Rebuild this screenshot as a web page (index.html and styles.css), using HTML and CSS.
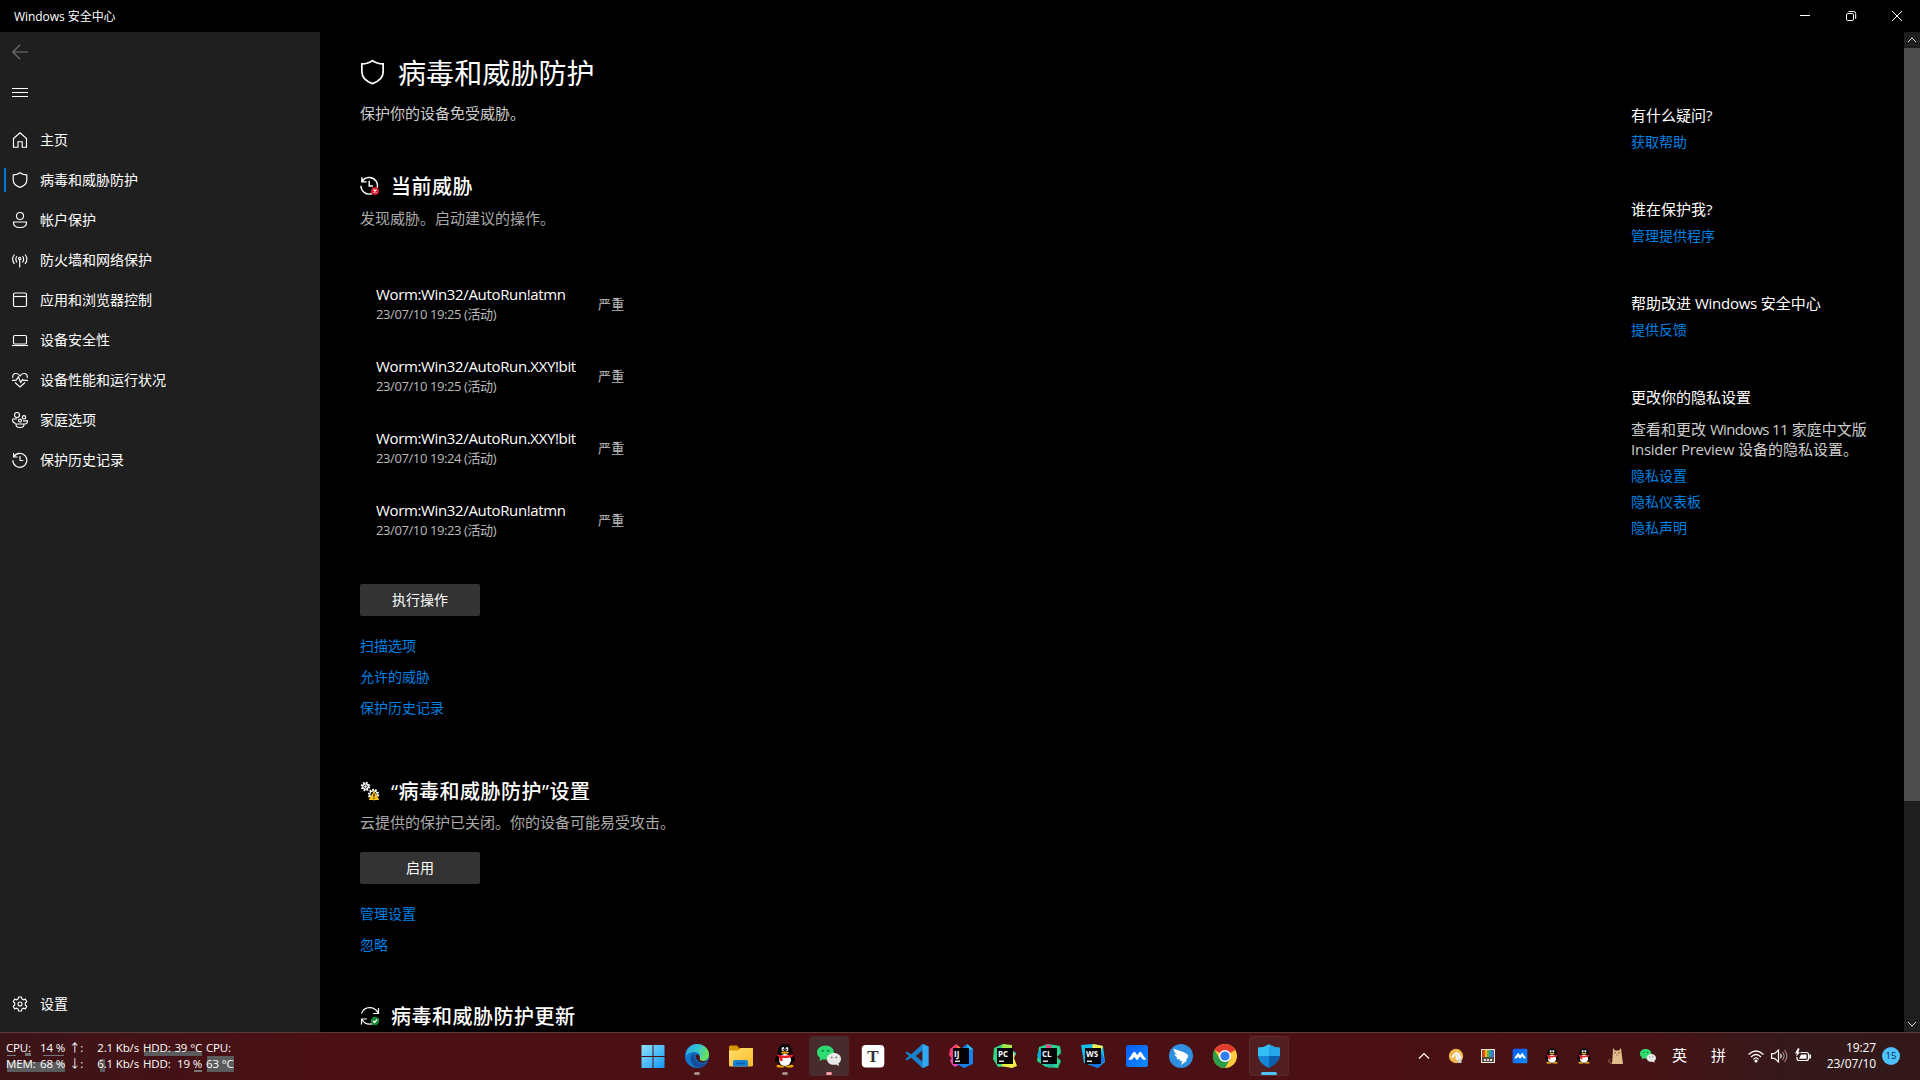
FILE: index.html
```html
<!DOCTYPE html>
<html lang="zh-CN">
<head>
<meta charset="utf-8">
<title>Windows 安全中心</title>
<link rel="stylesheet" href="styles.css">
</head>
<body>
<svg class="defs" width="0" height="0" aria-hidden="true">
  <defs>
    <linearGradient id="gWin" x1="0" y1="0" x2="1" y2="1"><stop offset="0" stop-color="#8fe4fd"/><stop offset="1" stop-color="#1197f5"/></linearGradient>
    <linearGradient id="gEdge" x1="0" y1="0" x2="1" y2=".4"><stop offset="0" stop-color="#2fa4e8"/><stop offset=".5" stop-color="#33c1d6"/><stop offset="1" stop-color="#6be05c"/></linearGradient>
    <linearGradient id="gFolder" x1="0" y1="0" x2="1" y2="1"><stop offset="0" stop-color="#ffdf70"/><stop offset="1" stop-color="#fcbb26"/></linearGradient>
    <linearGradient id="gMeet" x1="0" y1="0" x2="1" y2="1"><stop offset="0" stop-color="#0a5cff"/><stop offset="1" stop-color="#0a8cff"/></linearGradient>
    <symbol id="shield" viewBox="0 0 16 16"><path d="M8 .7C9.8 2.1 12 2.8 14.8 2.8V8c0 3.300-2.400 5.900-6.800 7.400C3.600 13.900 1.200 11.300 1.200 8V2.800C4 2.800 6.200 2.100 8 .7z"/></symbol>
    <symbol id="history" viewBox="0 0 16 16"><path d="M1.600 1v4h4M1.800 4.700A7 7 0 1 1 .8 8.300M8 4v4.500h3.200"/></symbol>
    <symbol id="penguin" viewBox="0 0 24 24">
      <ellipse cx="7.500" cy="22" rx="4" ry="1.500" fill="#f7a800"/><ellipse cx="16.500" cy="22" rx="4" ry="1.500" fill="#f7a800"/>
      <path d="M12 0C7.500 0 5 3 5 7.500c0 2-3 6-3 9 0 1.500 1 1.700 2 0 0 3.500 3 5.500 8 5.500s8-2 8-5.500c1 1.700 2 1.500 2 0 0-3-3-7-3-9C19 3 16.500 0 12 0z" fill="#050505"/>
      <ellipse cx="12" cy="16" rx="6" ry="6" fill="#fff"/><ellipse cx="10" cy="5" rx="1.400" ry="2" fill="#fff"/><ellipse cx="14" cy="5" rx="1.400" ry="2" fill="#fff"/><circle cx="10.400" cy="5.300" r=".6"/><circle cx="13.600" cy="5.300" r=".6"/>
      <ellipse cx="12" cy="8.600" rx="4" ry="1.200" fill="#f7a800"/><path d="M4.500 10c4 2.200 11 2.200 15 0l.5 2.500c-4 1.600-8 1.700-10.500 1.300V17H6.500v-4l-2.300-1z" fill="#eb1c26"/>
    </symbol>
    <symbol id="wechat" viewBox="0 0 24 24">
      <path d="M8.500 1.500C3.800 1.500 0 4.600 0 8.500c0 2.200 1.200 4.100 3.100 5.400L2.500 17l3.300-1.700c.9.200 1.800.3 2.700.3 4.700 0 8.500-3.200 8.500-7.100s-3.800-7-8.500-7z" fill="#2fdc72"/><circle cx="5.600" cy="6.800" r="1.100" fill="#0b7a3a"/><circle cx="11.300" cy="6.800" r="1.100" fill="#0b7a3a"/>
      <path d="M17 9c-4 0-7.100 2.600-7.100 5.900s3.100 5.900 7.100 5.900c.8 0 1.500-.1 2.200-.3L22 22l-.5-2.700c1.600-1.100 2.500-2.600 2.500-4.400C24 11.600 21 9 17 9z" fill="#e8e8e8"/><circle cx="14.700" cy="13.400" r=".9" fill="#777"/><circle cx="19.300" cy="13.400" r=".9" fill="#777"/>
    </symbol>
    <symbol id="meeting" viewBox="0 0 24 24"><rect x="1" y="1" width="22" height="22" rx="2.500" fill="url(#gMeet)"/><path d="M3.300 15.500 8.300 8.300q1-1.300 2 0l1.900 3 2-3q1-1.300 2 0l4.900 7.200q-2.800 1-4.300-.9l-1.600-2.300-2.200 3.100q-1.200 1.200-2.200-.3l-1.500-2.300-1.700 2.300Q6.200 16.500 3.300 15.500z" fill="#fff"/></symbol>
    <symbol id="gear" viewBox="0 0 16 16"><path d="M6.600 1h2.800l.5 1.900 1.500.9 2-.6 1.300 2.400-1.400 1.500v1.800l1.400 1.500-1.300 2.400-2-.6-1.500.9-.5 1.900H6.600l-.5-1.900-1.500-.9-2 .6-1.300-2.400 1.400-1.500V7.100L1.300 5.600l1.300-2.400 2 .6 1.500-.9z"/><circle cx="8" cy="8" r="2"/></symbol>
  </defs>
</svg>

<header class="titlebar">
  <span class="app-name">Windows 安全中心</span>
  <div class="window-buttons">
    <svg viewBox="0 0 12 12"><path d="M1 5.500h10"/></svg>
    <svg viewBox="0 0 12 12"><rect x="1.500" y="3.500" width="7" height="7" rx="1.300"/><path d="M3.500 1.500h5.200q2 0 2 2V9"/></svg>
    <svg viewBox="0 0 12 12"><path d="M1 1l10 10M11 1 1 11"/></svg>
  </div>
</header>

<div class="window">
  <nav class="sidebar">
    <div class="nav-row back"><svg viewBox="0 0 16 16"><path d="M16 8H.8M8 .8.8 8 8 15.200"/></svg></div>
    <div class="nav-row menu"><svg viewBox="0 0 16 16"><path d="M0 4.500h16M0 8.500h16M0 12.500h16"/></svg></div>
    <div class="nav-list">
      <div class="nav-row"><svg viewBox="0 0 16 16"><path d="M1.500 6.500 8 .8l6.500 5.700v8.700h-4.300V9.700H6v5.500H1.500z"/></svg><span>主页</span></div>
      <div class="nav-row active"><svg><use href="#shield"/></svg><span>病毒和威胁防护</span></div>
      <div class="nav-row"><svg viewBox="0 0 16 16"><circle cx="8" cy="4" r="3.500"/><path d="M1.500 10h13q.4 5.500-6.500 5.500T1.500 10z"/></svg><span>帐户保护</span></div>
      <div class="nav-row"><svg viewBox="0 0 16 16"><path d="M7.700 7v8.500M2.500 2.500Q-1.300 7 2.500 12M13 2.500Q16.800 7 13 12M5 4Q2.700 7 5 10.500M10.500 4q2.300 3 0 6.500"/><circle cx="7.700" cy="6.500" r="1.200"/></svg><span>防火墙和网络保护</span></div>
      <div class="nav-row"><svg viewBox="0 0 16 16"><rect x="1.500" y="1" width="13" height="13.500" rx="1.500"/><path d="M1.500 4.500h13"/></svg><span>应用和浏览器控制</span></div>
      <div class="nav-row"><svg viewBox="0 0 16 16"><rect x="1.500" y="3.500" width="13" height="8.500" rx="1.200"/><path d="M0 13.500h16"/></svg><span>设备安全性</span></div>
      <div class="nav-row"><svg viewBox="0 0 16 16"><path d="M.9 6C0 3 2 1.500 4 1.500c2 0 3.200 1 4 2.500.8-1.500 2-2.500 4-2.500s4 1.500 3.100 4.500M0 8.300h4L6.300 5l2.400 5.300 2-2.800.8.800H16M3 10.500l5 4.500 5-4.500"/></svg><span>设备性能和运行状况</span></div>
      <div class="nav-row"><svg viewBox="0 0 16 16"><circle cx="5" cy="3" r="2.500"/><circle cx="12" cy="5.300" r="1.700"/><circle cx="8" cy="8.600" r="1.500"/><path d="M5 7H.8Q0 11.200 3.800 11.200M11 8.800h4.500q.2 3-3 3.200M4 12h8q.4 3.500-4 3.500T4 12z"/></svg><span>家庭选项</span></div>
      <div class="nav-row"><svg><use href="#history"/></svg><span>保护历史记录</span></div>
    </div>
    <div class="nav-row settings"><svg><use href="#gear"/></svg><span>设置</span></div>
  </nav>

  <main class="content">
    <div class="primary">
      <h1><svg><use href="#shield"/></svg>病毒和威胁防护</h1>
      <p class="lead">保护你的设备免受威胁。</p>

      <section class="current">
        <h2><svg viewBox="0 0 20 20"><g transform="scale(1.180)"><path d="M1.600 1v4h4M1.800 4.700A7 7 0 1 1 .8 8.300M7.800 4v4.500h3.200"/></g><circle class="bad" cx="15" cy="15" r="4"/><path class="mark" d="m13.500 13.500 3 3m0-3-3 3"/></svg>当前威胁</h2>
        <p>发现威胁。启动建议的操作。</p>
        <ul class="threats">
          <li><div><b>Worm:Win32/AutoRun!atmn</b><small>23/07/10 19:25 (活动)</small></div><em>严重</em></li>
          <li><div><b>Worm:Win32/AutoRun.XXY!bit</b><small>23/07/10 19:25 (活动)</small></div><em>严重</em></li>
          <li><div><b>Worm:Win32/AutoRun.XXY!bit</b><small>23/07/10 19:24 (活动)</small></div><em>严重</em></li>
          <li><div><b>Worm:Win32/AutoRun!atmn</b><small>23/07/10 19:23 (活动)</small></div><em>严重</em></li>
        </ul>
        <button>执行操作</button>
        <div class="links"><a>扫描选项</a><a>允许的威胁</a><a>保护历史记录</a></div>
      </section>

      <section class="protection">
        <h2><svg viewBox="0 0 20 20"><circle class="cog" cx="5.500" cy="5.500" r="3.700"/><circle cx="5.500" cy="5.500" r="2.700"/><circle cx="5.500" cy="5.500" r=".7"/><circle class="cog" cx="13.500" cy="13.500" r="4.700"/><circle cx="13.500" cy="13.500" r="3.700"/><path class="warn" d="M14 9.500 19.300 19H8.700z"/><path class="bang" d="M14 12.500v3.300m0 1v1.200"/></svg><span>“病毒和威胁防护”设置</span></h2>
        <p>云提供的保护已关闭。你的设备可能易受攻击。</p>
        <button>启用</button>
        <div class="links"><a>管理设置</a><a>忽略</a></div>
      </section>

      <section class="updates">
        <h2><svg viewBox="0 0 20 20"><path d="M1.500 7.500C3 3.500 6 1.600 9.500 1.600c4 0 7 2.200 8.500 5.200M18.500 2v5.500H13M18 12q-2 6.200-8.500 6.200-5 0-7.500-4.700M1.500 18.500V13H7"/><circle class="good" cx="15" cy="15" r="4.200"/><path class="mark" d="m13 15 1.500 1.500 2.700-3"/></svg>病毒和威胁防护更新</h2>
      </section>
    </div>

    <aside class="help">
      <section><h3>有什么疑问?</h3><a>获取帮助</a></section>
      <section><h3>谁在保护我?</h3><a>管理提供程序</a></section>
      <section><h3>帮助改进 <span class="latin">Windows</span> 安全中心</h3><a>提供反馈</a></section>
      <section><h3>更改你的隐私设置</h3><p>查看和更改 <span class="latin tight">Windows 11</span> 家庭中文版<br><span class="latin">Insider Preview</span> 设备的隐私设置。</p><a>隐私设置</a><a>隐私仪表板</a><a>隐私声明</a></section>
    </aside>
  </main>

  <div class="scrollbar">
    <svg viewBox="0 0 16 16"><path d="m4 10 4-4 4 4"/></svg>
    <div class="thumb"></div>
    <svg viewBox="0 0 16 16"><path d="m4 6 4 4 4-4"/></svg>
  </div>
</div>

<footer class="taskbar">
  <div class="stats">
    <div class="stat usage"><span>CPU:</span><span>14 %</span></div>
    <div class="arrow">↑:</div><div class="rate">2.1 Kb/s</div>
    <div class="stat temp"><span>HDD:</span><span>39 °C</span></div><div>CPU:</div>
    <div class="stat memory"><span>MEM:</span><span>68 %</span></div>
    <div class="arrow">↓:</div><div class="rate traffic">6.1 Kb/s</div>
    <div class="stat disk"><span>HDD:</span><span>19 %</span></div><div class="cpu-temp">63 °C</div>
  </div>

  <div class="apps">
    <div class="app"><svg viewBox="0 0 24 24"><path fill="url(#gWin)" d="M.5 1h11v11H.5zM12.500 1h11v11h-11zM.5 13h11v11H.5zM12.500 13h11v11h-11z"/></svg></div>
    <div class="app running"><svg viewBox="0 0 24 24"><circle cx="12" cy="12" r="12" fill="#1277ca"/><path d="M1 10C2 4 6.500 0 12 0c6.500 0 12 4.500 12 10.500 0 4-3 6.500-6.500 6.500-3 0-4-1.500-3-3 1.500-2.500-.5-6-4.500-6-4.500 0-8 2-9 4z" fill="url(#gEdge)"/><path d="M9 9c-5 2-5 13 5 14.800 4-.3 7-2.800 8.500-5.500-7 3.500-14-1-13.500-9.300z" fill="#124d9c"/><path d="M10.500 10.500c-.5 4 2.500 8.500 8 8.300l3.800-1.200 1-1.400c-2.500 1.400-8.800 1.600-8.800-1.400 1.500-2.500-1.500-5-4-4.300z" fill="#4a1013"/></svg></div>
    <div class="app"><svg viewBox="0 0 24 24"><path d="M0 3q0-1.500 1.500-1.500H8l2.500 3H22V12H0z" fill="#d99600"/><path d="M0 6.500h9L11.500 4H24v17q0 1.500-1.500 1.500h-21Q0 22.500 0 21z" fill="url(#gFolder)"/><path d="M4 22.500V18q0-2 2-2h11q2 0 2 2v4.500z" fill="#1681d4"/><path d="M7 19.500h9" stroke="#0a5aa5" stroke-width="1.400"/></svg></div>
    <div class="app running"><svg><use href="#penguin"/></svg></div>
    <div class="app running focused attention"><svg><use href="#wechat"/></svg></div>
    <div class="app"><svg viewBox="0 0 24 24"><rect x=".8" y="1" width="22.500" height="22.500" rx="4" fill="#fff"/><text x="12" y="17.500" text-anchor="middle" class="serif-glyph">T</text></svg></div>
    <div class="app"><svg viewBox="0 0 24 24"><path d="m17.500 0 6 2.500v19l-6 2.500L6 13.500 2.300 16.500.3 15.500 4 12 .3 8.500l2-1L6 10.500zM17.500 6.500 10.800 12l6.700 5.500z" fill="#1681cf" fill-rule="evenodd"/><path d="m17.500 0 6 2.500v19l-6 2.500z" fill="#32a7f2"/></svg></div>
    <div class="app"><svg viewBox="0 0 24 24"><path d="m1 5 6-5 4 4-1 16-6 2-3-5 2-2-3-4z" fill="#f83a78"/><path d="m8 1 5 4-3 4z" fill="#ff9b33"/><path d="m1 16 6-5 4 9-5 3z" fill="#df4acb"/><path d="m13 4 5-4 6 5v15l-9 4-7-4z" fill="#1682ed"/><path d="m18 0 6 5-5 1z" fill="#24c4ef"/><rect x="4" y="4" width="16" height="16" fill="#050508"/><text x="5" y="12.500" class="ide">IJ</text><path d="M6 16.500h5v1.500H6z" fill="#ddd"/></svg></div>
    <div class="app"><svg viewBox="0 0 24 24"><path d="m1 4 9-4 9 3 1 5-5 14-10 1-5-8z" fill="#31d783"/><path d="m10 0 9 1v5H8z" fill="#a6e947"/><path d="m18 6 5 3-2 5 3 8-5 2-11-2z" fill="#efee45"/><path d="m20 7 3 2-1 3z" fill="#25bdea"/><rect x="4" y="4" width="16" height="16" fill="#050508"/><text x="5" y="12.500" class="ide">PC</text><path d="M6 16.500h5v1.500H6z" fill="#ddd"/></svg></div>
    <div class="app"><svg viewBox="0 0 24 24"><path d="m2 3 9-3 12 2 1 7-4 4 4 4-3 7-12-1-9-6z" fill="#24d892"/><path d="m0 11 4-7v13z" fill="#09a8e5"/><path d="m9 0 6 2-2 4H9z" fill="#ec458e"/><path d="m8 20 11-3-2 5-5 2z" fill="#28b6a3"/><rect x="4" y="4" width="16" height="16" fill="#050508"/><text x="5" y="12.500" class="ide">CL</text><path d="M6 16.500h5v1.500H6z" fill="#ddd"/></svg></div>
    <div class="app"><svg viewBox="0 0 24 24"><path d="m0 1 12-1 10 2 2 16-7 6-8-3-6-2z" fill="#12bfe9"/><path d="m12 0 10 2-2 5-9-2z" fill="#f5ee4e"/><path d="m20 8 4 9-7 7-8-3z" fill="#1475e6"/><rect x="4" y="4" width="16" height="16" fill="#050508"/><text x="5" y="12.500" class="ide">WS</text><path d="M6 16.500h5v1.500H6z" fill="#ddd"/></svg></div>
    <div class="app"><svg><use href="#meeting"/></svg></div>
    <div class="app"><svg viewBox="0 0 24 24"><circle cx="12" cy="12" r="12" fill="#2f8fe0"/><path d="M4.500 4.500c4 2 9 2.500 14 6q1.500 1.500-.5 4l-1.300 1.800 1.500.2-6 4.500 1-4-2.500.3 1-1.500c-2.500 0-4-1-4.500-2l2 .2c-2-.8-3.500-2.200-3.800-4l2.500.8C6 9.200 4.700 7 4.500 4.500z" fill="#fff"/></svg></div>
    <div class="app"><svg viewBox="0 0 24 24"><circle cx="12" cy="12" r="12" fill="#ffcb3c"/><path d="M12 12 1.600 6A12 12 0 0 1 22.400 6z" fill="#e33b2e"/><path d="M1.600 6A12 12 0 0 0 12 24l5.200-9L12 12 6.800 15z" fill="#2a9d4a"/><circle cx="12" cy="12" r="6" fill="#fff"/><circle cx="12" cy="12" r="4.600" fill="#327df0"/></svg></div>
    <div class="app running focused security"><svg viewBox="0 0 24 24"><path d="M12 0q5 3.500 11 3.500V12H12z" fill="#25a5ea"/><path d="M12 0Q7 3.500 1 3.500V12h11z" fill="#35bef4"/><path d="M1 12h11v12Q2 19.500 1 12z" fill="#1687d6"/><path d="M12 12h11q-1 7.500-11 12z" fill="#0a5fae"/></svg></div>
  </div>

  <div class="tray">
    <svg class="line" viewBox="0 0 16 16"><path d="m3 10.500 5-5 5 5"/></svg>
    <svg viewBox="0 0 16 16"><circle cx="8" cy="8" r="7.200" fill="#f1b64c"/><path d="M3 8.500 8 3.500l4 2-1 3-4-1-2 3z" fill="#fff3d8"/><circle cx="10.500" cy="9.500" r="3" fill="#eee"/><path d="M10 11h3.500v4H10z" fill="#d3cec7"/></svg>
    <svg viewBox="0 0 16 16"><path d="M1 1h14v14H1z" fill="#f1e8d5"/><path d="M2 2h12v12H2z" fill="#554e48"/><path d="M2.500 2h2.500v7H2.500z" fill="#e64a1f"/><path d="M5 2h2v7H5z" fill="#ffb51e"/><path d="M7 2h2.500v7H7z" fill="#65b92e"/><path d="M9.500 2h2v7h-2z" fill="#12a6d9"/><path d="M11.500 2h2v7h-2z" fill="#4777db"/><path d="M4 11h2v2H4zM7 11h2v2H7zM10 11h2v2h-2z" fill="#ddd"/></svg>
    <svg><use href="#meeting"/></svg>
    <svg><use href="#penguin"/></svg>
    <svg><use href="#penguin"/></svg>
    <svg viewBox="0 0 16 16"><path d="M2 11Q-1 13 2 15h4" fill="none" stroke="#9b735a"/><path d="m5 0 2 2.500h4L13 0l.6 5L15 16H4L4.800 5z" fill="#e1bd8c"/><path d="M7 4v1.500M11 4v1.500M8.500 7h1" stroke="#5c3d29"/></svg>
    <svg><use href="#wechat"/></svg>
    <span class="ime">英</span><span class="ime pinyin">拼</span>
    <div class="status">
      <svg class="line" viewBox="0 0 16 16"><path d="M.5 6.500q7.500-7 15 0M3 9q5-5 10 0M5.300 11.300q2.700-2.700 5.400 0"/><circle cx="8" cy="13" r="1" fill="#fff"/></svg>
      <svg class="line" viewBox="0 0 16 16"><path d="M.6 5.700h2.800L7.500 2v12l-4.100-3.700H.6z"/><path d="M9.500 5.800q1.600 2.200 0 4.400"/><path class="faint" d="M11.500 4q3.200 4 0 8M13.500 2q4.800 6 0 12"/></svg>
      <svg class="line" viewBox="0 0 16 16"><path d="M5.500 4.500h6q2 0 2 2v4q0 2-2 2H4q-2 0-2-2V9"/><path fill="#fff" stroke="none" d="M6 6.500h5.500v4.300H4zM14.300 6.500H16v4h-1.700zM3 0 0 5.500h2L1 9l4-5H3.200l1.500-3z"/></svg>
    </div>
    <div class="clock"><span>19:27</span><span>23/07/10</span></div>
    <div class="badge">15</div>
  </div>
</footer>
</body>
</html>
```
FILE: styles.css
```css
* { box-sizing: border-box; }
body {
  margin: 0; width: 1920px; height: 1080px; overflow: hidden;
  display: flex; flex-direction: column;
  background: #000; color: #fff;
  font: 14px/20px "Open Sans", "Noto Sans CJK SC", sans-serif;
}
.defs { position: absolute; }
h1, h2, h3, p, ul { margin: 0; padding: 0; font-weight: 400; }
svg { display: block; flex: none; overflow: visible; }
a { color: #0080e2; }

.titlebar { height: 32px; flex: none; display: flex; align-items: center; justify-content: space-between; padding: 0 17px 0 14px; }
.app-name { font-size: 12px; letter-spacing: -.05px; padding-top: 1px; }
.window-buttons { display: flex; gap: 34px; }
.window-buttons svg { width: 12px; height: 12px; fill: none; stroke: #fff; }

.window { flex: 1; min-height: 0; display: flex; }
.sidebar { width: 320px; flex: none; background: #1f1f1f; display: flex; flex-direction: column; padding-bottom: 8px; }
.nav-row { height: 40px; flex: none; display: flex; align-items: center; gap: 12px; padding-left: 12px; }
.nav-row svg { width: 16px; height: 16px; fill: none; stroke: #fff; stroke-width: 1.150; }
.nav-row.back svg { stroke: #777; }
.nav-row.menu svg { stroke-width: 1; }
.nav-list { padding-top: 8px; }
.nav-row.active { background: linear-gradient(#0078d7, #0078d7) 4px 8px / 2px 24px no-repeat; }
.nav-row.settings { margin-top: auto; }

.content { flex: 1; min-width: 0; display: flex; justify-content: space-between; overflow: hidden; padding-left: 40px; }
.primary { width: 600px; flex: none; }
h1 { display: flex; align-items: center; gap: 13px; font-size: 28px; line-height: 40px; margin-top: 21px; letter-spacing: .1px; }
h1 svg { width: 25px; height: 26px; margin-top: -3px; fill: none; stroke: #fff; stroke-width: 1.1; }
p { font-size: 15px; color: #aaa; }
.lead { color: #ccc; margin-top: 10px; }
h2 { display: flex; align-items: center; gap: 11px; height: 28px; font-size: 20px; line-height: 28px; font-weight: 500; letter-spacing: .5px; }
h2 svg { width: 20px; height: 20px; margin-top: -2px; fill: none; stroke: #fff; stroke-width: 1.2; }
.current { padding-top: 50px; }
.current p { margin-top: 7px; }
h2 .bad { fill: #d9172b; stroke: none; }
h2 .good { fill: #10892f; stroke: none; }
h2 .mark { stroke: #fff; stroke-width: 1.3; }
h2 .cog { stroke-dasharray: 1.7 1.2; stroke-width: 2; }
h2 .warn { fill: #fcc414; stroke: none; }
h2 .bang { stroke: #3a2b00; stroke-width: 1.4; }
.threats { list-style: none; margin-top: 40px; }
.threats li { height: 72px; display: flex; align-items: center; padding-left: 16px; }
.threats div { width: 222px; display: flex; flex-direction: column; }
.threats b { font-size: 15px; line-height: 20px; font-weight: 400; letter-spacing: -.35px; white-space: nowrap; }
.threats small { font-size: 13px; line-height: 20px; color: #bbb; letter-spacing: -.4px; }
.threats em { font-size: 13px; font-style: normal; color: #bbb; letter-spacing: .3px; }
button { display: block; width: 120px; height: 32px; padding: 0; border: 0; border-radius: 2px; background: #333; color: #fff; font: inherit; }
.threats + button { margin-top: 28px; }
.links { display: flex; flex-direction: column; gap: 11px; margin-top: 20px; }
.protection { padding-top: 60px; }
.protection p { margin-top: 6px; }
.protection button { margin-top: 20px; }
.updates { padding-top: 48px; }

.help { width: 273px; flex: none; padding-top: 73px; display: flex; flex-direction: column; gap: 47px; }
.help section { display: flex; flex-direction: column; gap: 6px; }
h3 { font-size: 15px; line-height: 20px; margin-bottom: 1px; }
.help p { color: #ccc; margin: 5px 0 0; line-height: 20px; }
.help p + a { margin-top: 1px; }
.latin { letter-spacing: -.25px; }
.latin.tight { letter-spacing: -.7px; }

.scrollbar { width: 16px; flex: none; background: #1f1f1f; display: flex; flex-direction: column; }
.scrollbar svg { width: 16px; height: 16px; fill: none; stroke: #ddd; }
.scrollbar .thumb { height: 753px; background: #4d4d4d; margin-bottom: auto; }

.taskbar {
  height: 48px; flex: none; display: flex; align-items: center; border-top: 1px solid #5b3c3e; padding-bottom: 1px;
  background: linear-gradient(90deg, #3b1418 0, #4c1014 330px, #4a1013 1400px, #451316 1660px, #34191b 1800px, #33181a);
}
.stats {
  width: 633px; flex: none; padding-left: 6px; display: grid;
  grid-template: 16px 16px / 59px 17px 57px 4px 59px 4px 30px;
  font-size: 11.500px; line-height: 15px; letter-spacing: -.15px; white-space: nowrap;
}
.stats > :nth-child(5n+2) { grid-column: 2; padding-left: 4px; }
.stats > :nth-child(5n+3) { grid-column: 3; text-align: right; }
.stats > :nth-child(5n+4) { grid-column: 5; }
.stats > :nth-child(5n) { grid-column: 7; }
.stat { display: flex; justify-content: space-between; background-repeat: no-repeat; }
.usage { background: linear-gradient(#777, #777) 1px 15px / 9px 1px no-repeat, linear-gradient(#777, #777) 19px 13px / 6px 3px no-repeat, linear-gradient(#777, #777) 37px 15px / 21px 1px no-repeat; }
.temp { background: linear-gradient(#5b5b5d, #5b5b5d) 1px 11px / 58px 5px no-repeat; }
.memory { background: linear-gradient(#5b5b5d, #5b5b5d) 1px 6px / 58px 10px no-repeat; }
.traffic { background: linear-gradient(#5b5b5d, #5b5b5d) 18px 3px / 5px 13px no-repeat; }
.disk { background: linear-gradient(#777, #777) 51px 14px / 8px 2px no-repeat; }
.cpu-temp { background: linear-gradient(#5b5b5d, #5b5b5d) 1px 0 / 27px 16px no-repeat; }

.apps { display: flex; gap: 4px; }
.app { position: relative; width: 40px; height: 40px; padding: 8px; border-radius: 4px; }
.app svg { width: 24px; height: 24px; }
.app.focused { background: #472c2e; }
.app.security { background: #531e22; box-shadow: inset 0 0 0 1px #5c292c; }
.app.running::after { content: ""; position: absolute; left: 17px; bottom: 1px; width: 6px; height: 3px; border-radius: 2px; background: #a08a8c; }
.app.attention::after { background: #ff99a0; }
.app.security::after { left: 12px; width: 16px; background: #4cc2ff; }
.serif-glyph { font: 700 17px "Liberation Serif", serif; fill: #333; }
.ide { font: 700 8px "Open Sans", sans-serif; fill: #fff; }

.tray { flex: 1; display: flex; align-items: center; padding-left: 127px; }
.tray > svg { width: 16px; height: 16px; margin-right: 16px; }
.tray .line { fill: none; stroke: #fff; stroke-width: 1.200; }
.tray .faint { stroke: #9a8588; }
.ime { font-size: 15px; width: 15px; margin: -2px 24px 0 0; }
.ime.pinyin { margin-right: 22px; }
.status { display: flex; gap: 8px; }
.status svg { width: 16px; height: 16px; }
.status svg:nth-child(2) { margin-left: -1px; }
.clock { width: 65px; display: flex; flex-direction: column; align-items: flex-end; font-size: 12px; line-height: 16px; letter-spacing: -.1px; }
.badge { width: 18px; height: 18px; margin-left: 6px; border-radius: 50%; background: #4cc2ff; color: #102a38; font-size: 9.500px; line-height: 18px; text-align: center; }
```
